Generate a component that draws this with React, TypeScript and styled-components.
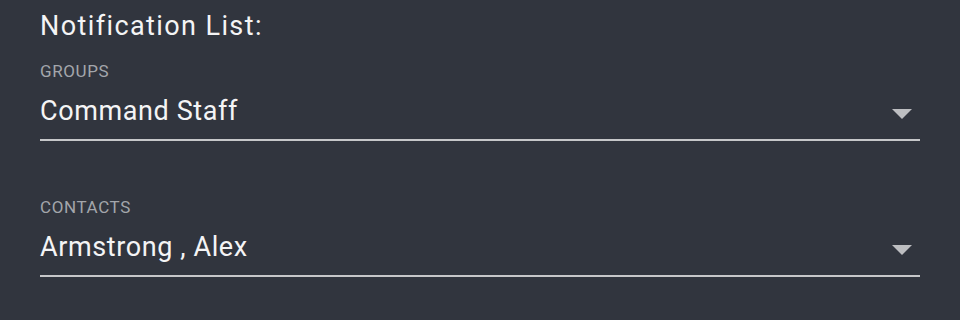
import styled, { createGlobalStyle } from 'styled-components';

const GlobalStyle = createGlobalStyle`
    html, body {
        margin: 0;
        padding: 0;
        background-color: #31353e;
    }

    body {
        font-family: Roboto, "Liberation Sans", sans-serif;
    }
`

const Page = styled.div`
    width: 960px;
    height: 320px;
    box-sizing: border-box;
    padding: 10px 40px 0 40px;
    background-color: #31353e;
    color: #fff;
`

const Title = styled.h2`
    margin: 0;
    font-size: 27px;
    line-height: 32px;
    font-weight: 400;
    letter-spacing: 1.4px;
    color: #f4f4f5;
`

const Field = styled.div<{ $gap: number }>`
    margin-top: ${(p) => p.$gap}px;
`

const Label = styled.div`
    font-size: 17px;
    line-height: 20px;
    letter-spacing: 0.6px;
    color: #a3a6ab;
    text-transform: uppercase;
`

const SelectRow = styled.div`
    display: flex;
    align-items: center;
    justify-content: space-between;
    margin-top: 14px;
    padding-bottom: 12px;
    border-bottom: 2px solid #c6c7c9;
    cursor: pointer;
`

const Value = styled.span`
    font-size: 27px;
    line-height: 32px;
    letter-spacing: 0.6px;
    color: #f4f4f5;
`

const Arrow = styled.svg`
    width: 20px;
    height: 10px;
    margin-top: 5px;
    margin-right: 8px;
    fill: #bdbec1;
`

function Select({ label, value, gap }: { label: string; value: string; gap: number }) {
    return (
        <Field $gap={gap}>
            <Label>{label}</Label>
            <SelectRow>
                <Value>{value}</Value>
                <Arrow viewBox="0 0 20 10">
                    <path d="M0 0 L20 0 L10 10 Z" />
                </Arrow>
            </SelectRow>
        </Field>
    )
}

export default function App() {
    return (
        <>
            <GlobalStyle />
            <Page>
                <Title>Notification List:</Title>
                <Select label="Groups" value="Command Staff" gap={19} />
                <Select label="Contacts" value="Armstrong , Alex" gap={56} />
            </Page>
        </>
    )
}
